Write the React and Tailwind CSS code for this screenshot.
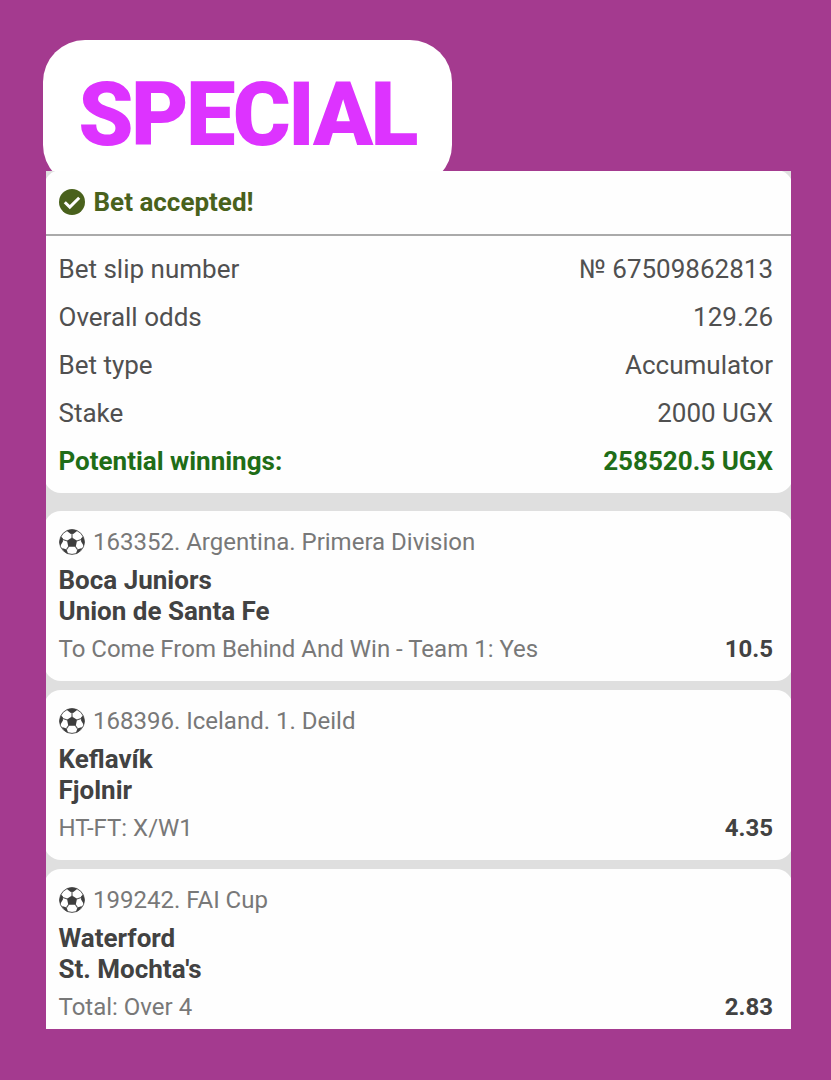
import React from "react";

const details = [
  { label: "Bet slip number", value: "№ 67509862813" },
  { label: "Overall odds", value: "129.26" },
  { label: "Bet type", value: "Accumulator" },
  { label: "Stake", value: "2000 UGX" },
];

const events = [
  {
    league: "163352. Argentina. Primera Division",
    home: "Boca Juniors",
    away: "Union de Santa Fe",
    market: "To Come From Behind And Win - Team 1: Yes",
    odds: "10.5",
  },
  {
    league: "168396. Iceland. 1. Deild",
    home: "Keflavík",
    away: "Fjolnir",
    market: "HT-FT: X/W1",
    odds: "4.35",
  },
  {
    league: "199242. FAI Cup",
    home: "Waterford",
    away: "St. Mochta's",
    market: "Total: Over 4",
    odds: "2.83",
  },
];

const CheckIcon = () => (
  <svg viewBox="0 0 26 26" className="size-[26px] shrink-0">
    <circle cx="13" cy="13" r="13" fill="#49611c" />
    <path d="M5.8 13.2l5 4.9 9.4-9.4" fill="none" stroke="#fff" strokeWidth="3" />
  </svg>
);

const BallIcon = () => (
  <svg viewBox="0 0 26 26" className="size-[26px] shrink-0">
    <circle cx="13" cy="13" r="12.4" fill="#fff" stroke="#555" strokeWidth="1" />
    <g fill="#3d3d3d">
      <path d="M13 8.6l5 3.1-1.3 6.1H9.3L8 11.7z" />
      <path d="M7.6 1.8Q13 -.6 18.4 1.8L14.2 5h-2.4z" />
      <path d="M24 7.4Q26.4 12.6 24.8 17L22.2 12.8 22 9.6z" />
      <path d="M2 7.4Q-.4 12.6 1.2 17L3.8 12.8 4 9.6z" />
      <path d="M3 19l4.6 1.4 1.6 4.6Q5 23.4 3 19z" />
      <path d="M23 19l-4.6 1.4-1.6 4.6Q21 23.4 23 19z" />
    </g>
    <path
      d="M13 4v6M17 12.2l5.2-1.8M9 12.2l-5.2-1.8M16 17l2.5 3.6M10 17l-2.5 3.6"
      stroke="#555"
      strokeWidth="1.1"
    />
  </svg>
);

const EventCard = ({ event }) => (
  <div className="h-[170px] shrink-0 rounded-[17px] bg-[#fefefe] pt-4 pr-5 pl-[15px]">
    <div className="flex h-[30px] items-center gap-[8.5px] text-[24px] text-[#787878]">
      <BallIcon />
      <span>{event.league}</span>
    </div>
    <div className="mt-2 text-[26px] leading-[30.5px] font-bold text-[#424242]">
      <p>{event.home}</p>
      <p>{event.away}</p>
    </div>
    <div className="mt-[8px] flex h-[30px] items-center justify-between text-[24px] text-[#787878]">
      <span>{event.market}</span>
      <span className="font-bold text-[#424242]">{event.odds}</span>
    </div>
  </div>
);

export default function App() {
  return (
    <div className="flex h-[1080px] w-[831px] flex-col overflow-hidden bg-[#a43a8f] pt-10 pl-[42.5px] font-['Roboto',sans-serif] whitespace-nowrap">
      {/* Title */}
      <div className="flex h-[147px] w-[409px] shrink-0 items-center justify-center rounded-[42px] bg-white">
        <h1 className="pt-[3px] text-[88.5px] leading-[147px] font-black tracking-[-2.7px] text-[#dd33ff]">
          SPECIAL
        </h1>
      </div>

      {/* Slip */}
      <div className="-mt-[16.5px] ml-[3px] h-[858px] w-[745.5px] shrink-0 overflow-hidden bg-[#dfdfdf]">
        <div className="-mx-[2px] -mt-[1px] flex flex-col">
          <div className="h-[323.5px] shrink-0 rounded-[17px] bg-[#fefefe]">
            <div className="flex h-[66.5px] items-center gap-[9px] border-b-2 border-[#aaa] pr-5 pl-[15px] text-[26px] font-bold text-[#49611c]">
              <CheckIcon />
              <span className="pt-px">Bet accepted!</span>
            </div>
            <div className="pt-[9px] pr-5 pl-[15px] text-[26px] text-[#505050]">
              {details.map((row) => (
                <div key={row.label} className="flex h-12 items-center justify-between">
                  <span>{row.label}</span>
                  <span>{row.value}</span>
                </div>
              ))}
              <div className="flex h-12 items-center justify-between font-bold text-[#1f6d17]">
                <span>Potential winnings:</span>
                <span>258520.5 UGX</span>
              </div>
            </div>
          </div>

          {/* Events */}
          <div className="mt-[18px] flex flex-col gap-[9px]">
            {events.map((event) => (
              <EventCard key={event.league} event={event} />
            ))}
          </div>
        </div>
      </div>
    </div>
  );
}
